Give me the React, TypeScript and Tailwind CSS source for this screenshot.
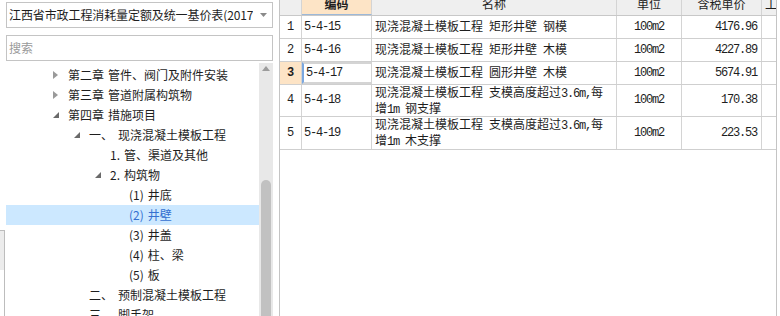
import type { ReactNode } from "react";

interface TreeNode {
  label: string;
  rest?: string;
  level: number;
  arrow?: "closed" | "open";
  selected?: boolean;
}

interface Row {
  no: string;
  code: string;
  name: string[];
  unit: string;
  price: string;
  h: string;
  current?: boolean;
}

const tree: TreeNode[] = [
  { label: "第二章", rest: "管件、阀门及附件安装", level: 0, arrow: "closed" },
  { label: "第三章", rest: "管道附属构筑物", level: 0, arrow: "closed" },
  { label: "第四章", rest: "措施项目", level: 0, arrow: "open" },
  { label: "一、", rest: "现浇混凝土模板工程", level: 1, arrow: "open" },
  { label: "1.", rest: "管、渠道及其他", level: 2 },
  { label: "2.", rest: "构筑物", level: 2, arrow: "open" },
  { label: "(1)", rest: "井底", level: 3 },
  { label: "(2)", rest: "井壁", level: 3, selected: true },
  { label: "(3)", rest: "井盖", level: 3 },
  { label: "(4)", rest: "柱、梁", level: 3 },
  { label: "(5)", rest: "板", level: 3 },
  { label: "二、", rest: "预制混凝土模板工程", level: 1 },
  { label: "三、", rest: "脚手架", level: 1 },
];

const rows: Row[] = [
  { no: "1", code: "5-4-15", name: ["现浇混凝土模板工程 矩形井壁 钢模"], unit: "100m2", price: "4176.96", h: "h-[23px]" },
  { no: "2", code: "5-4-16", name: ["现浇混凝土模板工程 矩形井壁 木模"], unit: "100m2", price: "4227.89", h: "h-[23px]" },
  { no: "3", code: "5-4-17", name: ["现浇混凝土模板工程 圆形井壁 木模"], unit: "100m2", price: "5674.91", h: "h-[23px]", current: true },
  { no: "4", code: "5-4-18", name: ["现浇混凝土模板工程 支模高度超过3.6m,每", "增1m 钢支撑"], unit: "100m2", price: "170.38", h: "h-[32px]" },
  { no: "5", code: "5-4-19", name: ["现浇混凝土模板工程 支模高度超过3.6m,每", "增1m 木支撑"], unit: "100m2", price: "223.53", h: "h-[33px]" },
];

const indent = ["pl-[37px]", "pl-[58px]", "pl-[79px]", "pl-[98px]"];

// latin runs in the grid are half width, like the old song-ti bitmap font
function Mixed({ text }: { text: string }) {
  const parts = text.split(/([\x00-\x7f]+)/).filter(Boolean);
  return (
    <>
      {parts.map((p, i) =>
        /^[\x00-\x7f]+$/.test(p) ? (
          <span key={i} className="font-['Liberation_Mono'] tracking-[-1.2px] whitespace-pre">
            {p}
          </span>
        ) : (
          <span key={i}>{p}</span>
        ),
      )}
    </>
  );
}

function Arrow({ kind }: { kind?: "closed" | "open" }) {
  if (kind === "closed")
    return (
      <svg width="5" height="8" viewBox="0 0 5 8">
        <path d="M0 0 L5 4 L0 8 Z" fill="#9a9a9a" />
      </svg>
    );
  if (kind === "open")
    return (
      <svg width="6" height="6" viewBox="0 0 6 6">
        <path d="M6 0 L6 6 L0 6 Z" fill="#6a6a6a" />
      </svg>
    );
  return null;
}

function Cell({ w, children, className = "" }: { w: string; children?: ReactNode; className?: string }) {
  return <div className={`${w} shrink-0 border-r border-[#d4d4d4] flex items-center ${className}`}>{children}</div>;
}

export default function App() {
  return (
    <div className="w-[780px] h-[316px] flex overflow-hidden bg-white text-[12px] text-[#1e1e1e] font-['Noto_Sans_CJK_SC',sans-serif]">
      {/* sliver of the window behind */}
      <div className="w-[6px] shrink-0 flex flex-col">
        <div className="h-[230px]" />
        <div className="h-[40px] w-[5px] border-t border-r border-[#bdbdbd] bg-[#ececec]" />
        <div className="flex-1 w-[5px] border-r border-[#bdbdbd]" />
      </div>

      <div className="w-[267px] shrink-0 flex flex-col">
        <div className="mt-[2px] h-[26px] border border-[#c4c4c4] flex items-center pl-[2px] pr-[5px]">
          <div className="flex-1 overflow-hidden whitespace-nowrap tracking-[-0.1px]">江西省市政工程消耗量定额及统一基价表(2017)</div>
          <svg width="7" height="4" viewBox="0 0 7 4" className="ml-[7px]">
            <path d="M0 0 L7 0 L3.5 4 Z" fill="#8a8a8a" />
          </svg>
        </div>
        <div className="mt-[7px] h-[26px] border border-[#c4c4c4] flex items-center pl-[2px] text-[#9a9a9a]">搜索</div>

        <div className="flex-1 flex mt-[2px] min-h-0">
          <div className="flex-1 pt-[2px] overflow-hidden">
            {tree.map((n) => (
              <div
                key={n.label + n.rest}
                className={`h-[20px] flex items-center whitespace-nowrap ${indent[n.level]} ${
                  n.selected ? "bg-[#cce8ff] text-[#3470d0]" : ""
                }`}
              >
                <div className="w-[25px] shrink-0 flex justify-center">
                  <Arrow kind={n.arrow} />
                </div>
                <span>{n.label}</span>
                <span className={n.level === 1 ? "ml-[5px]" : "ml-[4px]"}>{n.rest}</span>
              </div>
            ))}
          </div>
          <div className="w-[14px] shrink-0 bg-[#e8e8e8] flex flex-col items-center">
            <svg width="8" height="5" viewBox="0 0 8 5" className="mt-[3px]">
              <path d="M0 5 L4 0 L8 5 Z" fill="#9c9c9c" />
            </svg>
            <div className="h-[109px]" />
            <div className="flex-1 w-[10px] rounded-t-[5px] bg-[#c1c1c1]" />
          </div>
        </div>
      </div>

      <div className="w-[6px] shrink-0" />

      <div className="w-[498px] shrink-0 border-l border-r border-[#c4c4c4] flex flex-col">
        <div className="h-[16px] flex border-b border-[#c8c8c8] bg-[#efefef] overflow-hidden">
          <Cell w="w-[22px]" />
          <Cell w="w-[70px]" className="justify-center items-start bg-[#fde4c6] border-b border-b-[#9cb8d8] font-bold">
            <span className="leading-[12px] -mt-[2px]">编码</span>
          </Cell>
          <Cell w="w-[245px]" className="justify-center items-start">
            <span className="leading-[12px] -mt-[2px]">名称</span>
          </Cell>
          <Cell w="w-[65px]" className="justify-center items-start">
            <span className="leading-[12px] -mt-[2px]">单位</span>
          </Cell>
          <Cell w="w-[80px]" className="justify-center items-start">
            <span className="leading-[12px] -mt-[2px]">含税单价</span>
          </Cell>
          <Cell w="w-[14px]" className="items-start overflow-hidden border-r-0">
            <span className="leading-[12px] -mt-[2px] pl-[3px] whitespace-nowrap">工</span>
          </Cell>
        </div>

        {rows.map((r) => (
          <div key={r.no} className={`flex border-b border-[#cfcfcf] leading-[13px] ${r.h}`}>
            <Cell
              w="w-[22px]"
              className={`justify-center font-['Liberation_Mono'] ${r.current ? "bg-[#fde4c6] font-bold" : ""}`}
            >
              {r.no}
            </Cell>
            <Cell
              w="w-[70px]"
              className={`pl-[2px] ${r.current ? "border-2 border-[#6e6e6e] border-l-[#7aa7e0] pl-[1px]" : ""}`}
            >
              <Mixed text={r.code} />
            </Cell>
            <Cell w="w-[245px]" className="pl-[3px]">
              <div className="flex flex-col">
                {r.name.map((l) => (
                  <div key={l} className="whitespace-nowrap">
                    <Mixed text={l} />
                  </div>
                ))}
              </div>
            </Cell>
            <Cell w="w-[65px]" className="justify-center">
              <Mixed text={r.unit} />
            </Cell>
            <Cell w="w-[80px]" className="justify-end pr-[4px]">
              <Mixed text={r.price} />
            </Cell>
            <Cell w="w-[14px]" className="border-r-0" />
          </div>
        ))}
        <div className="flex-1" />
      </div>
    </div>
  );
}
